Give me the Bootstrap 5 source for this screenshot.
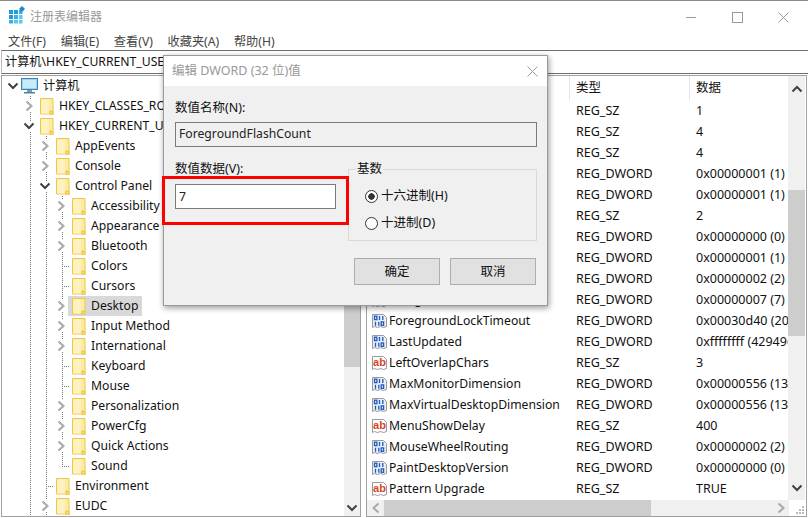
<!DOCTYPE html>
<html lang="zh-CN">
<head>
<meta charset="utf-8">
<title>注册表编辑器</title>
<link rel="stylesheet" href="https://cdn.jsdelivr.net/npm/bootstrap@5.3.0/dist/css/bootstrap.min.css">
<style>
html,body{margin:0;background:#fff;overflow:hidden}
body{font-family:"Noto Sans","Noto Sans CJK SC",sans-serif;font-size:12.5px;line-height:20px;color:#111}
.app{width:808px;height:518px;position:relative;border-top:1px solid #8a8a8a;overflow:hidden;background:#fff}
.tbar{height:32px;padding-left:9px}
.tbar .ttl{color:#999;margin-left:4px;font-size:12px}
.wico{margin-bottom:4px;flex:none}
.wbtns{margin-left:auto;padding-right:19px;gap:35px}
.menub{height:17px;padding-left:8px;gap:14.7px;color:#444;font-size:12.2px}
.addr{height:24px;margin-left:1px;border-top:1px solid #6e6e6e;border-bottom:1px solid #6e6e6e;border-left:1px solid #bbb;padding-left:3px;white-space:nowrap;overflow:hidden;background:#fff;line-height:22px;font-size:12.2px}
.panes{height:442px;margin-top:1px;padding-left:1px}
.lpane{width:360px;border:1px solid #a0a0a0;overflow:hidden}
.rpane{width:441px;margin-left:5px;border:1px solid #a0a0a0;overflow:hidden}
.treebox{width:341px;padding-left:3px;overflow:hidden;white-space:nowrap;font-size:12.2px}
.trow{height:20px}
.ind,.tw{width:16px;height:20px;flex:none;display:flex;align-items:center;justify-content:center}
.gv{background-image:repeating-linear-gradient(to bottom,#777 0 1px,transparent 1px 2px);background-size:1px 100%;background-position:9px 0;background-repeat:no-repeat}
.ge{background-image:repeating-linear-gradient(to bottom,#777 0 1px,transparent 1px 2px),repeating-linear-gradient(to right,#777 0 1px,transparent 1px 2px);background-size:1px 10px,7px 1px;background-position:9px 0,9px 10px;background-repeat:no-repeat}
.gm{background-image:repeating-linear-gradient(to bottom,#777 0 1px,transparent 1px 2px),repeating-linear-gradient(to right,#777 0 1px,transparent 1px 2px);background-size:1px 100%,7px 1px;background-position:9px 0,9px 10px;background-repeat:no-repeat}
.tw svg{background:#fff;display:block}
.tnode{height:20px;margin-left:-1px;padding:0 4px}
.tnode.sel{background:#d9d9d9}
.fld{margin-right:5px;flex:none}
.pcico{margin:0 5px 0 -3px;flex:none}
.sbv{width:17px;background:#f0f0f0;flex:none}
.sbv.lft{width:16px;margin-left:auto}
.sar{height:17px}
.thumb{background:#cdcdcd}
.sp1{height:200px}
.sp2{height:91px}
.sr1{height:93px}
.sr2{height:146px}
.listbox{width:421px;overflow:hidden;white-space:nowrap}
.lhead{height:24px}
.lhead>div{height:24px;line-height:23px;border-right:1px solid #e5e5e5}
.hn{width:203px}
.ht{width:120px;padding-left:6px}
.hd{flex:1;padding-left:6px;border-right:0!important}
.lrow{height:21px;line-height:21px}
.cn{width:204px;padding-left:4px;flex:none;overflow:hidden;font-size:12.2px}
.cn svg{margin-right:1px;flex:none}
.ct{width:120px;padding-left:5px;flex:none}
.cd{padding-left:5px;overflow:hidden;flex:1}
.sbh{height:16px;background:#f0f0f0}
.sbh .hbtn{width:17px;flex:none}
.hthumb{width:267px;height:16px;background:#cdcdcd}
.hfill{flex:1}
.grip{width:17px;height:16px;background:#fff}
.dlg{position:absolute;left:163px;top:54px;width:385px;height:251px;background:#f0f0f0;border:1px solid #9a9a9a;box-shadow:1px 2px 6px rgba(0,0,0,.4);color:#111}
.dtitle{height:30px;background:#fff;padding:0 9px 0 8px;color:#999;font-size:12.5px}
.dbody{padding:12px 10px 0 11px}
.lbl{height:20px;line-height:20px}
.fctl{height:25px;border:1px solid #7a7a7a;border-radius:0;padding:0 3px;font-size:12.2px;line-height:21px;color:#222;background-color:#fff;box-shadow:none}
.fctl[readonly]{background:#f0f0f0;padding-bottom:2px}
.fname{margin-top:4px;width:362px}
.r2{margin-top:12px;gap:12px}
.lc{width:161px;flex:none}
.lc .fctl{margin-top:5px}
.grp{width:189px;height:82px;border:1px solid #d9d9d9;padding:0 0 0 17px;margin:0}
.grp legend{float:none;width:auto;font-size:inherit;line-height:20px;margin:0 0 0 -10px;padding:0 1px}
.rad{height:20px;gap:3px;margin-top:7px;margin-left:-1px}
.rad+.rad{margin-top:7px}
.rdo{width:13px;height:13px;margin:0;border:1px solid #333;background-color:#fff;border-radius:50%;appearance:none;flex:none;box-shadow:none}
.rdo:checked{background-color:#fff;border-color:#333;background-image:radial-gradient(circle,#333 0 3px,transparent 3.4px)}
.dbtns{margin-top:17px;margin-right:1px;gap:10px}
.dbtn{width:86px;height:27px;padding:0;border:1px solid #adadad;border-radius:0;background:#e1e1e1;font-size:inherit;color:#111;line-height:24px}
.mark-box{position:absolute;left:162px;top:175px;width:187px;height:49px;border:3px solid #f00;pointer-events:none}
</style>
</head>
<body>
<svg width="0" height="0" style="position:absolute" aria-hidden="true">
<defs>
<symbol id="folder" viewBox="0 0 14 17"><path d="M.5.5h12.5v12.5h-3v3H.5z" fill="#fdeba3" stroke="#eec64c"/><path d="M1.5 1.5h7v14h-7z" fill="#fef3c0"/><path d="M10 13.5h3.500v3H10z" fill="#f6d566" stroke="#eec64c" stroke-width=".8"/></symbol>
<symbol id="chr" viewBox="0 0 10 12"><path d="M2.500 1.500 7.500 6l-5 4.500" fill="none" stroke="#a8a8a8" stroke-width="2"/></symbol>
<symbol id="chd" viewBox="0 0 12 10"><path d="M1.500 2.500 6 7l4.500-4.500" fill="none" stroke="#404040" stroke-width="2"/></symbol>
<symbol id="rsz" viewBox="0 0 17 16"><path d="M1.500 1.500h11l3 3v9l-3 1-3-1-3 1-3-1-2 1z" fill="#fff" stroke="#9a9a9a"/><text x="8.500" y="11" text-anchor="middle" font-family="Liberation Sans,sans-serif" font-size="11" font-weight="700" fill="#d8442a">ab</text></symbol>
<symbol id="rdw" viewBox="0 0 17 16"><path d="M1.500 1.500h11l3 3v9l-3 1-3-1-3 1-3-1-2 1z" fill="#e8effa" stroke="#9a9a9a"/><g fill="none" stroke="#2259b8" stroke-width="1.300"><rect x="3.500" y="3.200" width="2.400" height="3.400"/><path d="M8.500 3v4M11.800 3v4"/><path d="M4.500 8.700v4M7.800 8.700v4"/><rect x="10.200" y="8.900" width="2.400" height="3.400"/></g></symbol>
</defs>
</svg>
<div class="app d-flex flex-column">
  <div class="tbar d-flex align-items-center flex-shrink-0">
    <svg class="wico" width="17" height="18" viewBox="0 0 17 18" aria-hidden="true"><g fill="#1f9ce0"><rect x="0" y="4" width="4" height="4"/><rect x="5" y="4" width="4" height="4"/><rect x="10" y="4" width="3.500" height="4" fill="#36b2ea"/><rect x="0" y="9" width="4" height="4"/><rect x="5" y="9" width="4" height="4" fill="#36b2ea"/><rect x="10" y="9" width="3.500" height="4" fill="#58c8f2"/><rect x="0" y="14" width="4" height="3.500" fill="#36b2ea"/><rect x="5" y="14" width="4" height="3.500" fill="#58c8f2"/><rect x="10" y="14" width="3.500" height="3.500" fill="#58c8f2"/></g><path d="M13 0l3 3-3 3-3-3z" fill="#1f86c8"/></svg>
    <span class="ttl">注册表编辑器</span>
    <div class="wbtns d-flex align-items-center">
      <svg width="11" height="11" viewBox="0 0 11 11" aria-hidden="true"><path d="M0 5.500h10" stroke="#999"/></svg>
      <svg width="11" height="11" viewBox="0 0 11 11" aria-hidden="true"><rect x=".5" y=".5" width="10" height="10" fill="none" stroke="#999"/></svg>
      <svg width="11" height="11" viewBox="0 0 11 11" aria-hidden="true"><path d="M.5.500l10 10M10.500.500l-10 10" stroke="#999" fill="none"/></svg>
    </div>
  </div>
  <div class="menub d-flex align-items-center flex-shrink-0"><span>文件(F)</span><span>编辑(E)</span><span>查看(V)</span><span>收藏夹(A)</span><span>帮助(H)</span></div>
  <div class="addr flex-shrink-0">计算机\HKEY_CURRENT_USER\Control Panel\Desktop</div>
  <div class="panes d-flex flex-shrink-0">
    <div class="lpane d-flex">
      <div class="treebox">
        <div class="trow d-flex align-items-center"><span class="tw"><svg width="12" height="10"><use href="#chd"/></svg></span><span class="tnode d-flex align-items-center"><svg class="pcico" width="17" height="16" viewBox="0 0 17 16" aria-hidden="true"><rect x=".5" y=".5" width="16" height="11" fill="#9fd4ef" stroke="#3d86b8"/><rect x="2" y="2" width="13" height="8" fill="#c8eafa"/><rect x="6" y="12" width="5" height="2" fill="#7d9db0"/><rect x="3" y="14" width="11" height="1.500" fill="#4f7f9f"/></svg>计算机</span></div>
        <div class="trow d-flex align-items-center"><span class="ind"></span><span class="tw gv"><svg width="10" height="12"><use href="#chr"/></svg></span><span class="tnode d-flex align-items-center"><svg class="fld" width="14" height="17"><use href="#folder"/></svg>HKEY_CLASSES_ROOT</span></div>
        <div class="trow d-flex align-items-center"><span class="ind"></span><span class="tw gv"><svg width="12" height="10"><use href="#chd"/></svg></span><span class="tnode d-flex align-items-center"><svg class="fld" width="14" height="17"><use href="#folder"/></svg>HKEY_CURRENT_USER</span></div>
        <div class="trow d-flex align-items-center"><span class="ind"></span><span class="ind gv"></span><span class="tw gv"><svg width="10" height="12"><use href="#chr"/></svg></span><span class="tnode d-flex align-items-center"><svg class="fld" width="14" height="17"><use href="#folder"/></svg>AppEvents</span></div>
        <div class="trow d-flex align-items-center"><span class="ind"></span><span class="ind gv"></span><span class="tw gv"><svg width="10" height="12"><use href="#chr"/></svg></span><span class="tnode d-flex align-items-center"><svg class="fld" width="14" height="17"><use href="#folder"/></svg>Console</span></div>
        <div class="trow d-flex align-items-center"><span class="ind"></span><span class="ind gv"></span><span class="tw gv"><svg width="12" height="10"><use href="#chd"/></svg></span><span class="tnode d-flex align-items-center"><svg class="fld" width="14" height="17"><use href="#folder"/></svg>Control Panel</span></div>
        <div class="trow d-flex align-items-center"><span class="ind"></span><span class="ind gv"></span><span class="ind gv"></span><span class="tw gv"><svg width="10" height="12"><use href="#chr"/></svg></span><span class="tnode d-flex align-items-center"><svg class="fld" width="14" height="17"><use href="#folder"/></svg>Accessibility</span></div>
        <div class="trow d-flex align-items-center"><span class="ind"></span><span class="ind gv"></span><span class="ind gv"></span><span class="tw gv"><svg width="10" height="12"><use href="#chr"/></svg></span><span class="tnode d-flex align-items-center"><svg class="fld" width="14" height="17"><use href="#folder"/></svg>Appearance</span></div>
        <div class="trow d-flex align-items-center"><span class="ind"></span><span class="ind gv"></span><span class="ind gv"></span><span class="tw gv"><svg width="10" height="12"><use href="#chr"/></svg></span><span class="tnode d-flex align-items-center"><svg class="fld" width="14" height="17"><use href="#folder"/></svg>Bluetooth</span></div>
        <div class="trow d-flex align-items-center"><span class="ind"></span><span class="ind gv"></span><span class="ind gv"></span><span class="tw gm"></span><span class="tnode d-flex align-items-center"><svg class="fld" width="14" height="17"><use href="#folder"/></svg>Colors</span></div>
        <div class="trow d-flex align-items-center"><span class="ind"></span><span class="ind gv"></span><span class="ind gv"></span><span class="tw gm"></span><span class="tnode d-flex align-items-center"><svg class="fld" width="14" height="17"><use href="#folder"/></svg>Cursors</span></div>
        <div class="trow d-flex align-items-center"><span class="ind"></span><span class="ind gv"></span><span class="ind gv"></span><span class="tw gv"><svg width="10" height="12"><use href="#chr"/></svg></span><span class="tnode sel d-flex align-items-center"><svg class="fld" width="14" height="17"><use href="#folder"/></svg>Desktop</span></div>
        <div class="trow d-flex align-items-center"><span class="ind"></span><span class="ind gv"></span><span class="ind gv"></span><span class="tw gv"><svg width="10" height="12"><use href="#chr"/></svg></span><span class="tnode d-flex align-items-center"><svg class="fld" width="14" height="17"><use href="#folder"/></svg>Input Method</span></div>
        <div class="trow d-flex align-items-center"><span class="ind"></span><span class="ind gv"></span><span class="ind gv"></span><span class="tw gv"><svg width="10" height="12"><use href="#chr"/></svg></span><span class="tnode d-flex align-items-center"><svg class="fld" width="14" height="17"><use href="#folder"/></svg>International</span></div>
        <div class="trow d-flex align-items-center"><span class="ind"></span><span class="ind gv"></span><span class="ind gv"></span><span class="tw gm"></span><span class="tnode d-flex align-items-center"><svg class="fld" width="14" height="17"><use href="#folder"/></svg>Keyboard</span></div>
        <div class="trow d-flex align-items-center"><span class="ind"></span><span class="ind gv"></span><span class="ind gv"></span><span class="tw gm"></span><span class="tnode d-flex align-items-center"><svg class="fld" width="14" height="17"><use href="#folder"/></svg>Mouse</span></div>
        <div class="trow d-flex align-items-center"><span class="ind"></span><span class="ind gv"></span><span class="ind gv"></span><span class="tw gv"><svg width="10" height="12"><use href="#chr"/></svg></span><span class="tnode d-flex align-items-center"><svg class="fld" width="14" height="17"><use href="#folder"/></svg>Personalization</span></div>
        <div class="trow d-flex align-items-center"><span class="ind"></span><span class="ind gv"></span><span class="ind gv"></span><span class="tw gv"><svg width="10" height="12"><use href="#chr"/></svg></span><span class="tnode d-flex align-items-center"><svg class="fld" width="14" height="17"><use href="#folder"/></svg>PowerCfg</span></div>
        <div class="trow d-flex align-items-center"><span class="ind"></span><span class="ind gv"></span><span class="ind gv"></span><span class="tw gv"><svg width="10" height="12"><use href="#chr"/></svg></span><span class="tnode d-flex align-items-center"><svg class="fld" width="14" height="17"><use href="#folder"/></svg>Quick Actions</span></div>
        <div class="trow d-flex align-items-center"><span class="ind"></span><span class="ind gv"></span><span class="ind gv"></span><span class="tw ge"></span><span class="tnode d-flex align-items-center"><svg class="fld" width="14" height="17"><use href="#folder"/></svg>Sound</span></div>
        <div class="trow d-flex align-items-center"><span class="ind"></span><span class="ind gv"></span><span class="tw gm"></span><span class="tnode d-flex align-items-center"><svg class="fld" width="14" height="17"><use href="#folder"/></svg>Environment</span></div>
        <div class="trow d-flex align-items-center"><span class="ind"></span><span class="ind gv"></span><span class="tw gv"><svg width="10" height="12"><use href="#chr"/></svg></span><span class="tnode d-flex align-items-center"><svg class="fld" width="14" height="17"><use href="#folder"/></svg>EUDC</span></div>
      </div>
      <div class="sbv lft d-flex flex-column">
        <div class="sp1"></div>
        <div class="thumb sp2"></div>
        <div class="flex-grow-1"></div>
        <div class="sar d-flex align-items-center justify-content-center"><svg width="12" height="10"><use href="#chd"/></svg></div>
      </div>
    </div>
    <div class="rpane d-flex flex-column">
      <div class="d-flex flex-grow-1">
        <div class="listbox">
          <div class="lhead d-flex"><div class="hn"></div><div class="ht">类型</div><div class="hd">数据</div></div>
          <div class="lrow d-flex"><div class="cn"></div><div class="ct">REG_SZ</div><div class="cd">1</div></div>
          <div class="lrow d-flex"><div class="cn"></div><div class="ct">REG_SZ</div><div class="cd">4</div></div>
          <div class="lrow d-flex"><div class="cn"></div><div class="ct">REG_SZ</div><div class="cd">4</div></div>
          <div class="lrow d-flex"><div class="cn"></div><div class="ct">REG_DWORD</div><div class="cd">0x00000001 (1)</div></div>
          <div class="lrow d-flex"><div class="cn"></div><div class="ct">REG_DWORD</div><div class="cd">0x00000001 (1)</div></div>
          <div class="lrow d-flex"><div class="cn"></div><div class="ct">REG_SZ</div><div class="cd">2</div></div>
          <div class="lrow d-flex"><div class="cn"></div><div class="ct">REG_DWORD</div><div class="cd">0x00000000 (0)</div></div>
          <div class="lrow d-flex"><div class="cn"></div><div class="ct">REG_DWORD</div><div class="cd">0x00000001 (1)</div></div>
          <div class="lrow d-flex"><div class="cn"></div><div class="ct">REG_DWORD</div><div class="cd">0x00000002 (2)</div></div>
          <div class="lrow d-flex"><div class="cn d-flex align-items-center"><svg width="17" height="16"><use href="#rdw"/></svg>ForegroundFlashCount</div><div class="ct">REG_DWORD</div><div class="cd">0x00000007 (7)</div></div>
          <div class="lrow d-flex"><div class="cn d-flex align-items-center"><svg width="17" height="16"><use href="#rdw"/></svg>ForegroundLockTimeout</div><div class="ct">REG_DWORD</div><div class="cd">0x00030d40 (200000)</div></div>
          <div class="lrow d-flex"><div class="cn d-flex align-items-center"><svg width="17" height="16"><use href="#rdw"/></svg>LastUpdated</div><div class="ct">REG_DWORD</div><div class="cd">0xffffffff (4294967295)</div></div>
          <div class="lrow d-flex"><div class="cn d-flex align-items-center"><svg width="17" height="16"><use href="#rsz"/></svg>LeftOverlapChars</div><div class="ct">REG_SZ</div><div class="cd">3</div></div>
          <div class="lrow d-flex"><div class="cn d-flex align-items-center"><svg width="17" height="16"><use href="#rdw"/></svg>MaxMonitorDimension</div><div class="ct">REG_DWORD</div><div class="cd">0x00000556 (1366)</div></div>
          <div class="lrow d-flex"><div class="cn d-flex align-items-center"><svg width="17" height="16"><use href="#rdw"/></svg>MaxVirtualDesktopDimension</div><div class="ct">REG_DWORD</div><div class="cd">0x00000556 (1366)</div></div>
          <div class="lrow d-flex"><div class="cn d-flex align-items-center"><svg width="17" height="16"><use href="#rsz"/></svg>MenuShowDelay</div><div class="ct">REG_SZ</div><div class="cd">400</div></div>
          <div class="lrow d-flex"><div class="cn d-flex align-items-center"><svg width="17" height="16"><use href="#rdw"/></svg>MouseWheelRouting</div><div class="ct">REG_DWORD</div><div class="cd">0x00000002 (2)</div></div>
          <div class="lrow d-flex"><div class="cn d-flex align-items-center"><svg width="17" height="16"><use href="#rdw"/></svg>PaintDesktopVersion</div><div class="ct">REG_DWORD</div><div class="cd">0x00000000 (0)</div></div>
          <div class="lrow d-flex"><div class="cn d-flex align-items-center"><svg width="17" height="16"><use href="#rsz"/></svg>Pattern Upgrade</div><div class="ct">REG_SZ</div><div class="cd">TRUE</div></div>
        </div>
        <div class="sbv d-flex flex-column">
          <div class="sar d-flex align-items-center justify-content-center mt-1"><svg width="12" height="10" style="transform:rotate(180deg)"><use href="#chd"/></svg></div>
          <div class="sr1"></div>
          <div class="thumb sr2"></div>
          <div class="flex-grow-1"></div>
          <div class="sar d-flex align-items-center justify-content-center mb-1"><svg width="12" height="10"><use href="#chd"/></svg></div>
        </div>
      </div>
      <div class="d-flex">
        <div class="sbh d-flex align-items-center flex-grow-1">
          <div class="hbtn d-flex justify-content-center"><svg width="10" height="12" style="transform:rotate(180deg)"><use href="#chr"/></svg></div>
          <div class="hthumb"></div>
          <div class="hfill"></div>
          <div class="hbtn d-flex justify-content-center"><svg width="10" height="12"><use href="#chr"/></svg></div>
        </div>
        <div class="grip d-flex align-items-end justify-content-end"><svg width="12" height="12" viewBox="0 0 12 12" aria-hidden="true"><g fill="#bbb"><rect x="8" y="2" width="2" height="2"/><rect x="5" y="5" width="2" height="2"/><rect x="8" y="5" width="2" height="2"/><rect x="2" y="8" width="2" height="2"/><rect x="5" y="8" width="2" height="2"/><rect x="8" y="8" width="2" height="2"/></g></svg></div>
      </div>
    </div>
  </div>

  <div class="dlg">
    <div class="dtitle d-flex align-items-center justify-content-between"><span>编辑 DWORD (32 位)值</span><svg width="11" height="11" viewBox="0 0 11 11" aria-hidden="true"><path d="M.5.500l10 10M10.500.500l-10 10" stroke="#999" fill="none"/></svg></div>
    <div class="dbody">
      <div class="lbl">数值名称(N):</div>
      <input class="form-control fctl fname" readonly value="ForegroundFlashCount">
      <div class="r2 d-flex">
        <div class="lc">
          <div class="lbl">数值数据(V):</div>
          <input class="form-control fctl" value="7">
        </div>
        <fieldset class="grp">
          <legend>基数</legend>
          <label class="rad d-flex align-items-center"><input class="rdo" type="radio" name="b" checked>十六进制(H)</label>
          <label class="rad d-flex align-items-center"><input class="rdo" type="radio" name="b">十进制(D)</label>
        </fieldset>
      </div>
      <div class="dbtns d-flex justify-content-end">
        <button type="button" class="btn dbtn">确定</button>
        <button type="button" class="btn dbtn">取消</button>
      </div>
    </div>
  </div>
  <div class="mark-box"></div>
</div>
<script src="https://cdn.jsdelivr.net/npm/bootstrap@5.3.0/dist/js/bootstrap.bundle.min.js"></script>
</body>
</html>
